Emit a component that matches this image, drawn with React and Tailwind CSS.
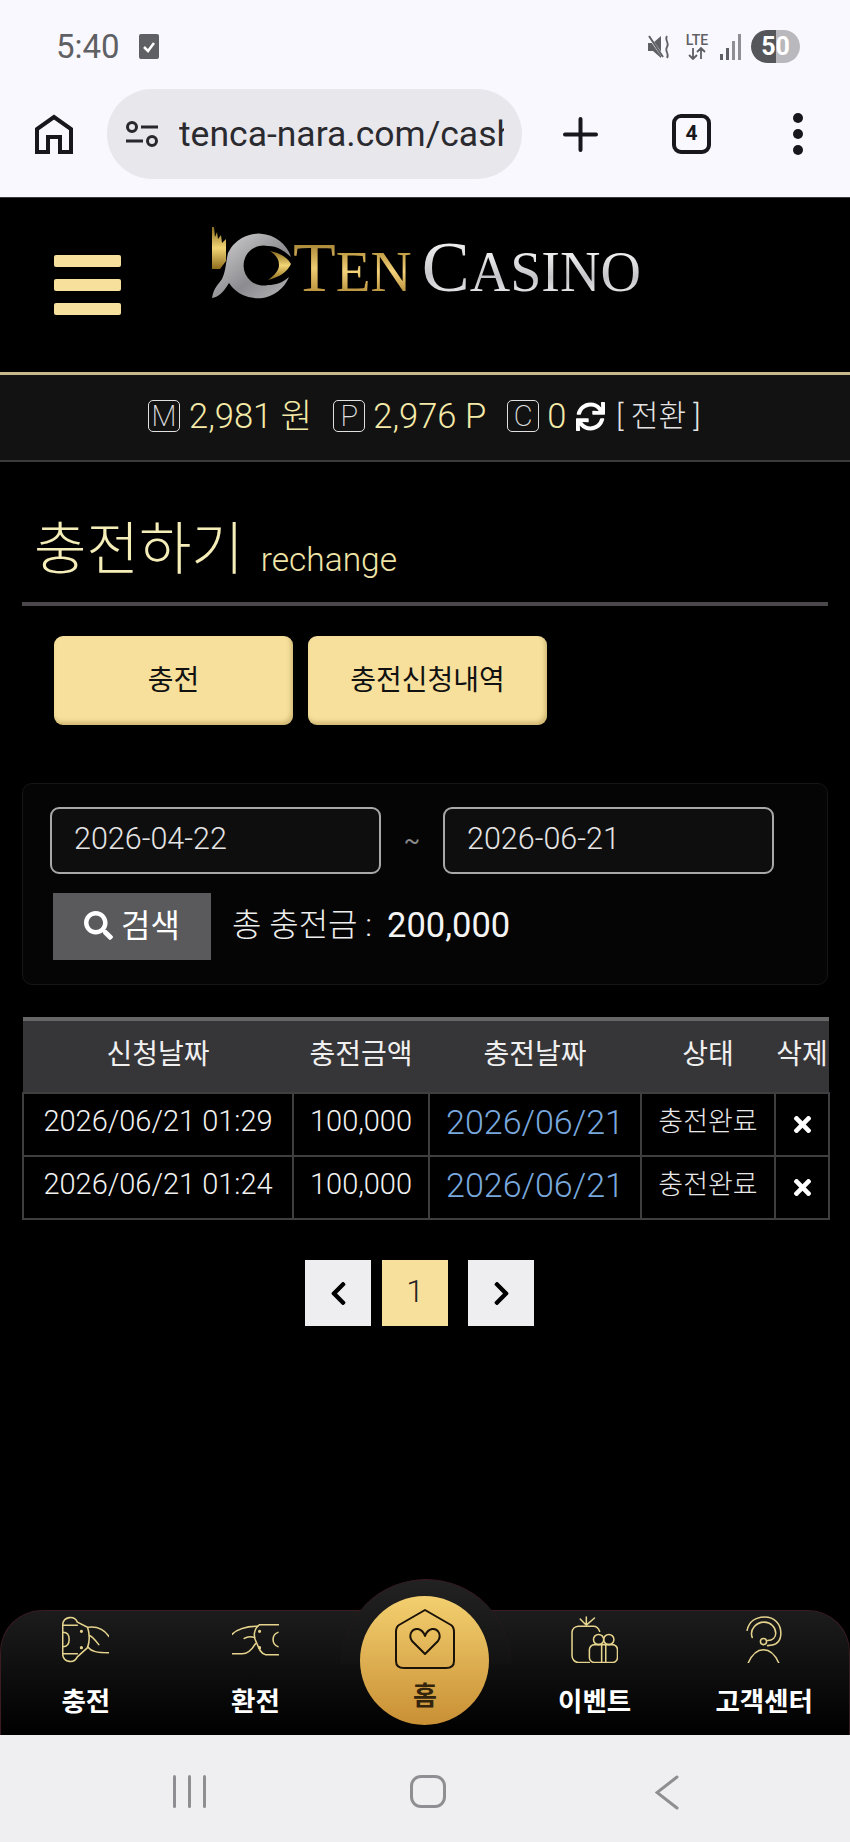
import React from "react";
import { FaSync, FaSearch, FaTimes, FaChevronLeft, FaChevronRight } from "react-icons/fa";

const gold = "#e6d48e";

function Emblem() {
  return (
    <svg width="80" height="72" viewBox="0 0 80 72" className="shrink-0">
      <defs>
        <linearGradient id="lgGold" x1="0" y1="0" x2="0" y2="1">
          <stop offset="0" stopColor="#8a6a1c" />
          <stop offset="0.5" stopColor="#f2d675" />
          <stop offset="1" stopColor="#8f6b1c" />
        </linearGradient>
        <linearGradient id="lgSilver" x1="0" y1="0" x2="1" y2="1">
          <stop offset="0" stopColor="#d8d8da" />
          <stop offset="0.6" stopColor="#8c8c90" />
          <stop offset="1" stopColor="#b5b5b8" />
        </linearGradient>
      </defs>
      <path d="M79 30A34 34 0 0 0 16 26C14 34 14 44 10 52C6 58 2 60 0 71C6 70 11 66 17 56A34 34 0 0 0 77 50C70 56 64 58 56 58A20 20 0 1 1 56 19C66 19 72 24 79 30Z" fill="url(#lgSilver)" />
      <path d="M0 0L2 0L3 10L5 5L6 12L9 8L10 16L14 12L14 34L8 42L0 42Z" fill="url(#lgGold)" />
      <path d="M58 24C68 26 75 30 79 37C75 45 68 50 56 53C63 48 67 43 67 38C67 32 64 28 58 24Z" fill="url(#lgGold)" />
    </svg>
  );
}

function IconCharge() {
  return (
    <svg width="47" height="47" viewBox="0 0 46 46" fill="none" stroke={gold} strokeWidth="1.5" strokeLinecap="round" strokeLinejoin="round">
      <path d="M0.7 8A7.5 7.5 0 0 1 15 6L25 11C27 17 27 25 25 31L15 40A7.5 7.5 0 0 1 0.7 38Z" />
      <path d="M1 9H15M1 37H15M1 16C5 16 7 19 7 23C7 27 5 30 1 30" />
      <circle cx="19" cy="15" r="0.8" fill={gold} />
      <circle cx="19" cy="31" r="0.8" fill={gold} />
      <path d="M26 11C34 10 41 13 46 20M27 19C30 20 33 24 36 28M25 30C29 35 34 36 46 36" />
    </svg>
  );
}

function IconExchange() {
  return (
    <svg width="47" height="33" viewBox="0 0 46 32" fill="none" stroke={gold} strokeWidth="1.5" strokeLinecap="round" strokeLinejoin="round">
      <path d="M45.5 1.5H27C22 5 20 12 24 19C26 24 28 30 33 31H45.5" />
      <path d="M45 9A7.5 7.5 0 0 0 45 23" />
      <path d="M0 11C6 5 14 3 25 3M0 30H10C16 30 20 25 23 20M12 15C15 13 19 13 22 14" />
      <circle cx="27" cy="8" r="0.8" fill={gold} />
      <circle cx="27" cy="24" r="0.8" fill={gold} />
    </svg>
  );
}

function IconEvent() {
  return (
    <svg width="47" height="47" viewBox="0 0 46 46" fill="none" stroke={gold} strokeWidth="1.5" strokeLinecap="round" strokeLinejoin="round">
      <path d="M18 45.5H7A6.5 6.5 0 0 1 1 39V16A6.5 6.5 0 0 1 7 10H22C25 10 27 12 28 15" />
      <path d="M15 9V1M15 9L9 3M15 9L23 2" />
      <rect x="18" y="28" width="27.5" height="17.5" rx="5" />
      <path d="M30 28V45M34 28V45" />
      <circle cx="27" cy="23" r="5" />
      <circle cx="37" cy="23" r="5" />
    </svg>
  );
}

function IconSupport() {
  return (
    <svg width="36" height="47" viewBox="0 0 35 46" fill="none" stroke={gold} strokeWidth="1.5" strokeLinecap="round" strokeLinejoin="round">
      <path d="M1 14C3 5 10 1 18 1C28 1 34 8 34 17C34 25 29 29 21 29" />
      <path d="M6 21C3 13 10 6 18 6C24 6 29 11 29 17C29 21 26 24 21 24" />
      <circle cx="17" cy="25" r="3" />
      <path d="M2 46C6 37 12 33 17 33C22 33 28 37 32 46" />
    </svg>
  );
}

function NavItem({ icon, label }) {
  return (
    <div className="flex flex-col items-center">
      <div className="h-[47px] mt-[5px] flex items-center justify-center">{icon}</div>
      <div className="mt-[22px] text-[26.5px] leading-[34px] font-bold text-white whitespace-nowrap">{label}</div>
    </div>
  );
}

function Row({ time }) {
  const td = "border-2 border-[#3f3f3f] text-center p-0 pb-[5px]";
  return (
    <tr className="h-[63px]">
      <td className={`${td} text-[29px] font-light text-[#f2f2f2] whitespace-nowrap`}>{time}</td>
      <td className={`${td} text-[29px] font-light text-[#f2f2f2]`}>100,000</td>
      <td className={`${td} text-[34px] font-light text-[#78a8de]`}>2026/06/21</td>
      <td className={`${td} text-[27px] font-light text-[#e8e8e8]`}>충전완료</td>
      <td className="border-2 border-[#3f3f3f] p-0">
        <span className="flex justify-center text-white"><FaTimes size={25} /></span>
      </td>
    </tr>
  );
}

function BalanceBadge({ children }) {
  return (
    <span className="w-[32px] h-[32px] rounded-[5px] border border-[#e0e0e0] text-[#e0e0e0] text-[29px] font-extralight leading-none flex items-center justify-center shrink-0">
      {children}
    </span>
  );
}

export default function App() {
  return (
    <div className="w-[850px] h-[1842px] bg-black flex flex-col overflow-hidden font-[Roboto,'Noto_Sans_CJK_KR',sans-serif]">
      {/* phone status + browser bars */}
      <div className="h-[198px] shrink-0 bg-[#f9f8fe] border-b border-[#3a3a3c]">
        <div className="h-[33px] mt-[30px] pl-[56px] pr-[50px] flex items-center justify-between">
          <div className="flex items-center">
            <span className="text-[33px] leading-none text-[#5f6063]">5:40</span>
            <svg width="20" height="25" viewBox="0 0 20 25" className="ml-[19px]">
              <rect width="20" height="25" rx="2" fill="#5f6063" />
              <path d="M5 13L9 17L15 9" fill="none" stroke="#fff" strokeWidth="2.5" />
            </svg>
          </div>
          <div className="flex items-center">
            <svg width="25" height="26" viewBox="0 0 25 26" fill="none">
              <path d="M1 9H6L14 2V24L6 17H1Z" fill="#5f6063" />
              <path d="M2 3L17 24" stroke="#f9f8fe" strokeWidth="2.5" />
              <path d="M2 2L16 23" stroke="#5f6063" strokeWidth="2" />
              <path d="M20 2C17 6 23 9 20 13C17 17 23 20 20 24" stroke="#5f6063" strokeWidth="1.8" />
            </svg>
            <div className="ml-[12px] w-[26px] flex flex-col items-center text-[#5f6063]">
              <span className="text-[14px] leading-[14px] font-medium">LTE</span>
              <svg width="20" height="13" viewBox="0 0 20 13" fill="none" stroke="#5f6063" strokeWidth="1.8">
                <path d="M6 1V12M2 8L6 12L10 8M14 12V1M10 5L14 1L18 5" />
              </svg>
            </div>
            <svg width="21" height="26" viewBox="0 0 21 26" className="ml-[10px]">
              <rect x="0" y="20" width="3" height="6" fill="#5f6063" />
              <rect x="6" y="14" width="3" height="12" fill="#5f6063" />
              <rect x="12" y="7" width="3" height="19" fill="#8f8f93" />
              <rect x="18" y="0" width="3" height="26" fill="#8f8f93" />
            </svg>
            <div className="ml-[10px] w-[49px] h-[33px] rounded-full overflow-hidden flex items-center justify-center bg-[linear-gradient(90deg,#55565a_52%,#b9b9bd_52%)] text-white font-bold text-[25px] leading-none">
              50
            </div>
          </div>
        </div>
        <div className="h-[90px] mt-[26px] pl-[35px] flex items-center">
          <svg width="38" height="40" viewBox="0 0 38 40" fill="none" stroke="#17171c" strokeWidth="4" strokeLinejoin="miter" className="shrink-0">
            <path d="M2 38V15L19 3L36 15V38H25V23H13V38Z" />
          </svg>
          <div className="ml-[34px] w-[415px] h-[90px] rounded-full bg-[#e8e7ec] pl-[19px] flex items-center shrink-0">
            <svg width="32" height="26" viewBox="0 0 32 26" fill="none" stroke="#27272c" strokeWidth="3" className="shrink-0">
              <circle cx="6" cy="6" r="4.5" />
              <path d="M15 6H32M0 20H17" />
              <circle cx="26" cy="20" r="4.5" />
            </svg>
            <div className="ml-[21px] w-[325px] overflow-hidden whitespace-nowrap text-[35.5px] leading-[44px] text-[#2a2a2f]">
              tenca-nara.com/cash
            </div>
          </div>
          <svg width="35" height="35" viewBox="0 0 35 35" stroke="#17171c" strokeWidth="4" strokeLinecap="round" className="ml-[41px] shrink-0">
            <path d="M17.5 2V33M2 17.5H33" />
          </svg>
          <div className="ml-[74px] w-[39px] h-[40px] rounded-[9px] border-4 border-[#17171c] flex items-center justify-center text-[21px] font-bold text-[#17171c] shrink-0">
            4
          </div>
          <div className="ml-[82px] flex flex-col gap-[6px]">
            <span className="w-[10px] h-[10px] rounded-full bg-[#17171c]" />
            <span className="w-[10px] h-[10px] rounded-full bg-[#17171c]" />
            <span className="w-[10px] h-[10px] rounded-full bg-[#17171c]" />
          </div>
        </div>
      </div>

      {/* site header */}
      <div className="h-[174px] shrink-0 pl-[54px] flex items-start">
        <div className="w-[67px] mt-[57px] flex flex-col gap-[12px]">
          <span className="h-[12px] rounded-[2px] bg-[#f6e09c]" />
          <span className="h-[12px] rounded-[2px] bg-[#f6e09c]" />
          <span className="h-[12px] rounded-[2px] bg-[#f6e09c]" />
        </div>
        <div className="ml-[91px] mt-[29px] flex items-end">
          <Emblem />
          <div className="ml-[1px] mb-[-4px] flex items-baseline font-['Liberation_Serif',serif] leading-none whitespace-nowrap">
            <span className="text-[70px] bg-[linear-gradient(180deg,#8a681c,#f0cc72_50%,#a47a26)] bg-clip-text text-transparent">T</span>
            <span className="text-[57px] bg-[linear-gradient(180deg,#a8832a,#f4d27a_50%,#a47a26)] bg-clip-text text-transparent">EN</span>
            <span className="ml-[10px] text-[72px] bg-[linear-gradient(180deg,#ffffff,#c8c8cc_60%,#f2f2f4)] bg-clip-text text-transparent">C</span>
            <span className="text-[56px] bg-[linear-gradient(180deg,#ffffff,#c4c4c8_60%,#f6f6f8)] bg-clip-text text-transparent">ASINO</span>
          </div>
        </div>
      </div>

      {/* balance */}
      <div className="h-[90px] shrink-0 border-t-[3px] border-t-[#c7b78b] border-b-2 border-b-[#3a3a3a] bg-[#121212] pl-[148px] pb-[3px] flex items-center">
        <BalanceBadge>M</BalanceBadge>
        <span className="ml-[9px] text-[34.5px] font-light text-[#f5eaa8] leading-none whitespace-nowrap">2,981 원</span>
        <span className="ml-[21px]"><BalanceBadge>P</BalanceBadge></span>
        <span className="ml-[8px] text-[34.5px] font-light text-[#f5eaa8] leading-none whitespace-nowrap">2,976 P</span>
        <span className="ml-[21px]"><BalanceBadge>C</BalanceBadge></span>
        <span className="ml-[8px] text-[34.5px] font-light text-[#f5eaa8] leading-none">0</span>
        <span className="ml-[10px] text-white"><FaSync size={29} /></span>
        <span className="ml-[11px] text-[30px] font-light text-[#e4e4e4] leading-none whitespace-nowrap">[ 전환 ]</span>
      </div>

      {/* content */}
      <div className="flex-1 px-[22px] flex flex-col">
        <div className="h-[144px] border-b-[4px] border-b-[#4a484b] flex items-end pb-[19px] pl-[12px] shrink-0">
          <span className="text-[57px] leading-[66px] font-light text-[#f6eeb8]">충전하기</span>
          <span className="ml-[17px] text-[33.5px] leading-[46px] font-light text-[#f0e5a8]">rechange</span>
        </div>

        <div className="mt-[30px] pl-[32px] flex gap-[15px]">
          {["충전", "충전신청내역"].map((t) => (
            <div key={t} className="w-[239px] h-[89px] rounded-[9px] bg-[#f6e09c] shadow-[inset_-2px_-3px_4px_rgba(120,90,20,0.3)] flex items-center justify-center text-[28px] text-[#111111]">
              {t}
            </div>
          ))}
        </div>

        <div className="mt-[58px] h-[202px] rounded-[10px] border border-[#161616] bg-[#050505] pt-[23px] pl-[27px]">
          <div className="flex items-center">
            <div className="w-[331px] h-[67px] rounded-[9px] border-2 border-[#a8a8a8] bg-[#0e0e0e] pl-[22px] pb-[4px] flex items-center text-[30.5px] font-light text-[#e4e4e4]">2026-04-22</div>
            <span className="w-[62px] text-center text-[24px] text-[#8a8a8a] leading-none">~</span>
            <div className="w-[331px] h-[67px] rounded-[9px] border-2 border-[#a8a8a8] bg-[#0e0e0e] pl-[22px] pb-[4px] flex items-center text-[30.5px] font-light text-[#e4e4e4]">2026-06-21</div>
          </div>
          <div className="mt-[19px] ml-[3px] flex items-center">
            <div className="w-[158px] h-[67px] bg-[#5a5a5c] flex items-center justify-center gap-[8px] text-white text-[32px] pb-[2px]">
              <FaSearch size={29} />
              <span className="leading-none">검색</span>
            </div>
            <span className="ml-[21px] text-[32px] leading-none font-light text-[#eeeeee] pb-[4px]">총 충전금 :</span>
            <span className="ml-[15px] text-[34.5px] leading-none text-[#f4f4f4] pb-[2px]">200,000</span>
          </div>
        </div>

        <table className="mt-[32px] w-[806px] table-fixed border-collapse">
          <colgroup>
            <col className="w-[270px]" />
            <col className="w-[136px]" />
            <col className="w-[212px]" />
            <col className="w-[134px]" />
            <col className="w-[54px]" />
          </colgroup>
          <thead>
            <tr className="h-[74px] bg-[#363538] border-t-[4px] border-t-[#666666]">
              {["신청날짜", "충전금액", "충전날짜", "상태", "삭제"].map((h) => (
                <th key={h} className="p-0 pb-[4px] text-[28px] font-normal text-[#f0f0f0] whitespace-nowrap text-center">{h}</th>
              ))}
            </tr>
          </thead>
          <tbody>
            <Row time="2026/06/21 01:29" />
            <Row time="2026/06/21 01:24" />
          </tbody>
        </table>

        <div className="mt-[40px] ml-[283px] flex">
          <div className="w-[66px] h-[66px] bg-[#eeeef0] flex items-center justify-center text-black"><FaChevronLeft size={27} /></div>
          <div className="ml-[11px] w-[66px] h-[66px] bg-[#f6e09c] flex items-center justify-center text-[32px] font-light text-[#222222] pb-[4px]">1</div>
          <div className="ml-[20px] w-[66px] h-[66px] bg-[#eeeef0] flex items-center justify-center text-black"><FaChevronRight size={27} /></div>
        </div>
      </div>

      {/* app tab bar */}
      <div className="relative h-[125px] shrink-0 rounded-t-[42px] border-t border-x border-[#3a1c22] bg-[linear-gradient(180deg,#1c1c1c,#000000)] grid grid-cols-5">
        <div className="absolute left-[340px] -top-[32px] w-[170px] h-[85px] rounded-t-full border-t border-[#3a1c22] bg-[linear-gradient(180deg,#222222,#121212)]" />
        <NavItem icon={<IconCharge />} label="충전" />
        <NavItem icon={<IconExchange />} label="환전" />
        <div className="relative flex justify-center">
          <div className="absolute -top-[15px] w-[129px] h-[129px] rounded-full bg-[linear-gradient(180deg,#f3d06f,#c98f35)] flex flex-col items-center">
            <svg width="62" height="62" viewBox="0 0 62 62" fill="none" stroke="#1a1208" strokeWidth="2" strokeLinejoin="round" className="mt-[12px] shrink-0">
              <path d="M31 2L57 17Q60 19 60 24V53Q60 60 52 60H10Q2 60 2 53V24Q2 19 5 17Z" />
              <path d="M31 46L18 33C14 27 18 20 24 21C28 22 30 25 31 28C32 25 34 22 38 21C44 20 48 27 44 33Z" />
            </svg>
            <span className="mt-[9px] text-[26px] leading-[34px] font-bold text-[#33240e]">홈</span>
          </div>
        </div>
        <NavItem icon={<IconEvent />} label="이벤트" />
        <NavItem icon={<IconSupport />} label="고객센터" />
      </div>

      {/* android nav */}
      <div className="h-[107px] shrink-0 bg-[#efeef1] flex items-start pt-[40px]">
        <div className="ml-[173px] flex gap-[12px]">
          <span className="w-[3px] h-[33px] rounded-sm bg-[#8e8e93]" />
          <span className="w-[3px] h-[33px] rounded-sm bg-[#8e8e93]" />
          <span className="w-[3px] h-[33px] rounded-sm bg-[#8e8e93]" />
        </div>
        <span className="ml-[204px] w-[36px] h-[33px] rounded-[11px] border-[3px] border-[#8e8e93]" />
        <svg width="24" height="35" viewBox="0 0 24 35" fill="none" stroke="#8e8e93" strokeWidth="3" strokeLinecap="round" className="ml-[209px]">
          <path d="M22 2L2 17.5L22 33" />
        </svg>
      </div>
    </div>
  );
}
